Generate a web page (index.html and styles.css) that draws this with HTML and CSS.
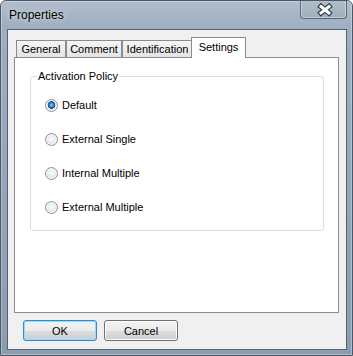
FILE: index.html
```html
<!DOCTYPE html>
<html>
<head>
<meta charset="utf-8">
<title>Properties</title>
<link rel="stylesheet" href="styles.css">
</head>
<body>
<div class="window">
  <div class="titlebar">
    <span class="title">Properties</span>
    <div class="close">
      <svg width="47" height="19" viewBox="0 0 47 19">
        <path d="M21 6.5 L29 13 M29 6.5 L21 13" stroke="#323c48" stroke-width="5.4" stroke-linecap="square" fill="none"/>
        <path d="M21 6.5 L29 13 M29 6.5 L21 13" stroke="#ffffff" stroke-width="3" stroke-linecap="square" fill="none"/>
      </svg>
    </div>
  </div>
  <div class="client">
    <div class="tabs">
      <div class="tab t-general">General</div>
      <div class="tab t-comment">Comment</div>
      <div class="tab t-ident">Identification</div>
      <div class="tab active t-settings">Settings</div>
    </div>
    <div class="panel">
      <fieldset class="group">
        <legend>Activation Policy</legend>
        <div class="options">
          <div class="row"><span class="radio checked"></span><span>Default</span></div>
          <div class="row"><span class="radio"></span><span>External Single</span></div>
          <div class="row"><span class="radio"></span><span>Internal Multiple</span></div>
          <div class="row"><span class="radio"></span><span>External Multiple</span></div>
        </div>
      </fieldset>
    </div>
    <div class="buttons">
      <button class="btn default">OK</button>
      <button class="btn">Cancel</button>
    </div>
  </div>
</div>
</body>
</html>
```
FILE: styles.css
```css
html, body {
  margin: 0;
  padding: 0;
  width: 353px;
  height: 356px;
  overflow: hidden;
  background: #ffffff;
}

.window {
  width: 353px;
  height: 356px;
  box-sizing: border-box;
  border: 1px solid #4b5765;
  border-radius: 6px 6px 0 0;
  background: linear-gradient(180deg, #b0becc 0, #9eaebf 28px, #8a9cb0 100%);
  box-shadow: inset 0 0 0 1px rgba(255,255,255,0.3);
  display: flex;
  flex-direction: column;
  font-family: "Liberation Sans", Arial, sans-serif;
  overflow: hidden;
}

.titlebar {
  height: 28px;
  flex: none;
  display: flex;
  align-items: flex-start;
}

.title {
  margin-left: 8px;
  margin-top: 7px;
  font-size: 12px;
  line-height: 14px;
  color: #000;
  text-shadow: 0 0 5px rgba(255,255,255,0.8);
}

.close {
  margin-left: auto;
  margin-right: 5px;
  margin-top: -1px;
  width: 47px;
  height: 19px;
  box-sizing: border-box;
  border: 1px solid #5b6775;
  border-top: none;
  border-radius: 0 0 4px 4px;
  background: linear-gradient(180deg, #b2beca, #a0aebd);
  box-shadow: inset 0 0 0 1px rgba(255,255,255,0.35);
  position: relative;
}

.close svg {
  position: absolute;
  left: -1px;
  top: 0;
}

.client {
  flex: none;
  height: 321px;
  box-sizing: border-box;
  margin: 0 5px 0 6px;
  border: 1px solid #56626f;
  background: #f0f0f0;
  padding: 7px 7px 0 6px;
}

.tabs {
  height: 20px;
  display: flex;
  align-items: flex-end;
  padding-left: 2px;
}

.tab {
  box-sizing: border-box;
  height: 17px;
  border: 1px solid #898c95;
  border-bottom: none;
  background: linear-gradient(180deg, #f5f5f5, #e4e4e4);
  font-size: 11px;
  line-height: 16px;
  text-align: center;
  color: #000;
  white-space: nowrap;
}

.t-general { width: 50px; }
.t-comment { width: 56px; }
.t-ident { width: 71px; }

.tab.active {
  width: 55px;
  height: 21px;
  margin-left: -2px;
  margin-bottom: -1px;
  background: #ffffff;
  line-height: 18px;
  position: relative;
  z-index: 1;
}

.panel {
  height: 256px;
  box-sizing: border-box;
  border: 1px solid #898c95;
  background: #ffffff;
  padding: 12px 14px 0 15px;
}

.group {
  margin: 0;
  padding: 0;
  min-width: 0;
  border: 1px solid #d5dfe5;
  border-radius: 3px;
}

.group legend {
  margin-left: 6px;
  padding: 0 1px;
  font-size: 11px;
  line-height: 13px;
  color: #000;
}

.options {
  padding: 5px 0 6px 14px;
}

.row {
  height: 34px;
  display: flex;
  align-items: center;
  font-size: 11px;
  color: #000;
}

.radio {
  width: 13px;
  height: 13px;
  box-sizing: border-box;
  border-radius: 50%;
  border: 1px solid #8f9396;
  margin-right: 4px;
  background: radial-gradient(circle at 50% 45%, #fbfbfb 0, #ececec 45%, #cfd0d2 100%);
  box-shadow: inset 0 0 0 1px #f6f6f6;
  flex: none;
}

.radio.checked {
  background:
    radial-gradient(circle at 50% 45%, #8fd6ff 0, #3c98e0 1.6px, #1f63a8 3px, #173f72 3.6px, transparent 4.1px),
    radial-gradient(circle at 50% 45%, #fbfbfb 0, #ececec 45%, #cfd0d2 100%);
}

.buttons {
  display: flex;
  gap: 7px;
  margin-top: 7px;
  margin-left: 9px;
}

.btn {
  width: 74px;
  height: 21px;
  box-sizing: border-box;
  padding: 0;
  border: 1px solid #707070;
  border-radius: 3px;
  background: linear-gradient(180deg, #f2f2f2 0, #ebebeb 50%, #dddddd 50%, #cfcfcf 100%);
  box-shadow: inset 0 0 0 1px #fcfcfc;
  font-family: "Liberation Sans", Arial, sans-serif;
  font-size: 11px;
  color: #000;
}

.btn.default {
  border-color: #3089d6;
  box-shadow: inset 0 0 0 1px #93dcf8;
}
```
